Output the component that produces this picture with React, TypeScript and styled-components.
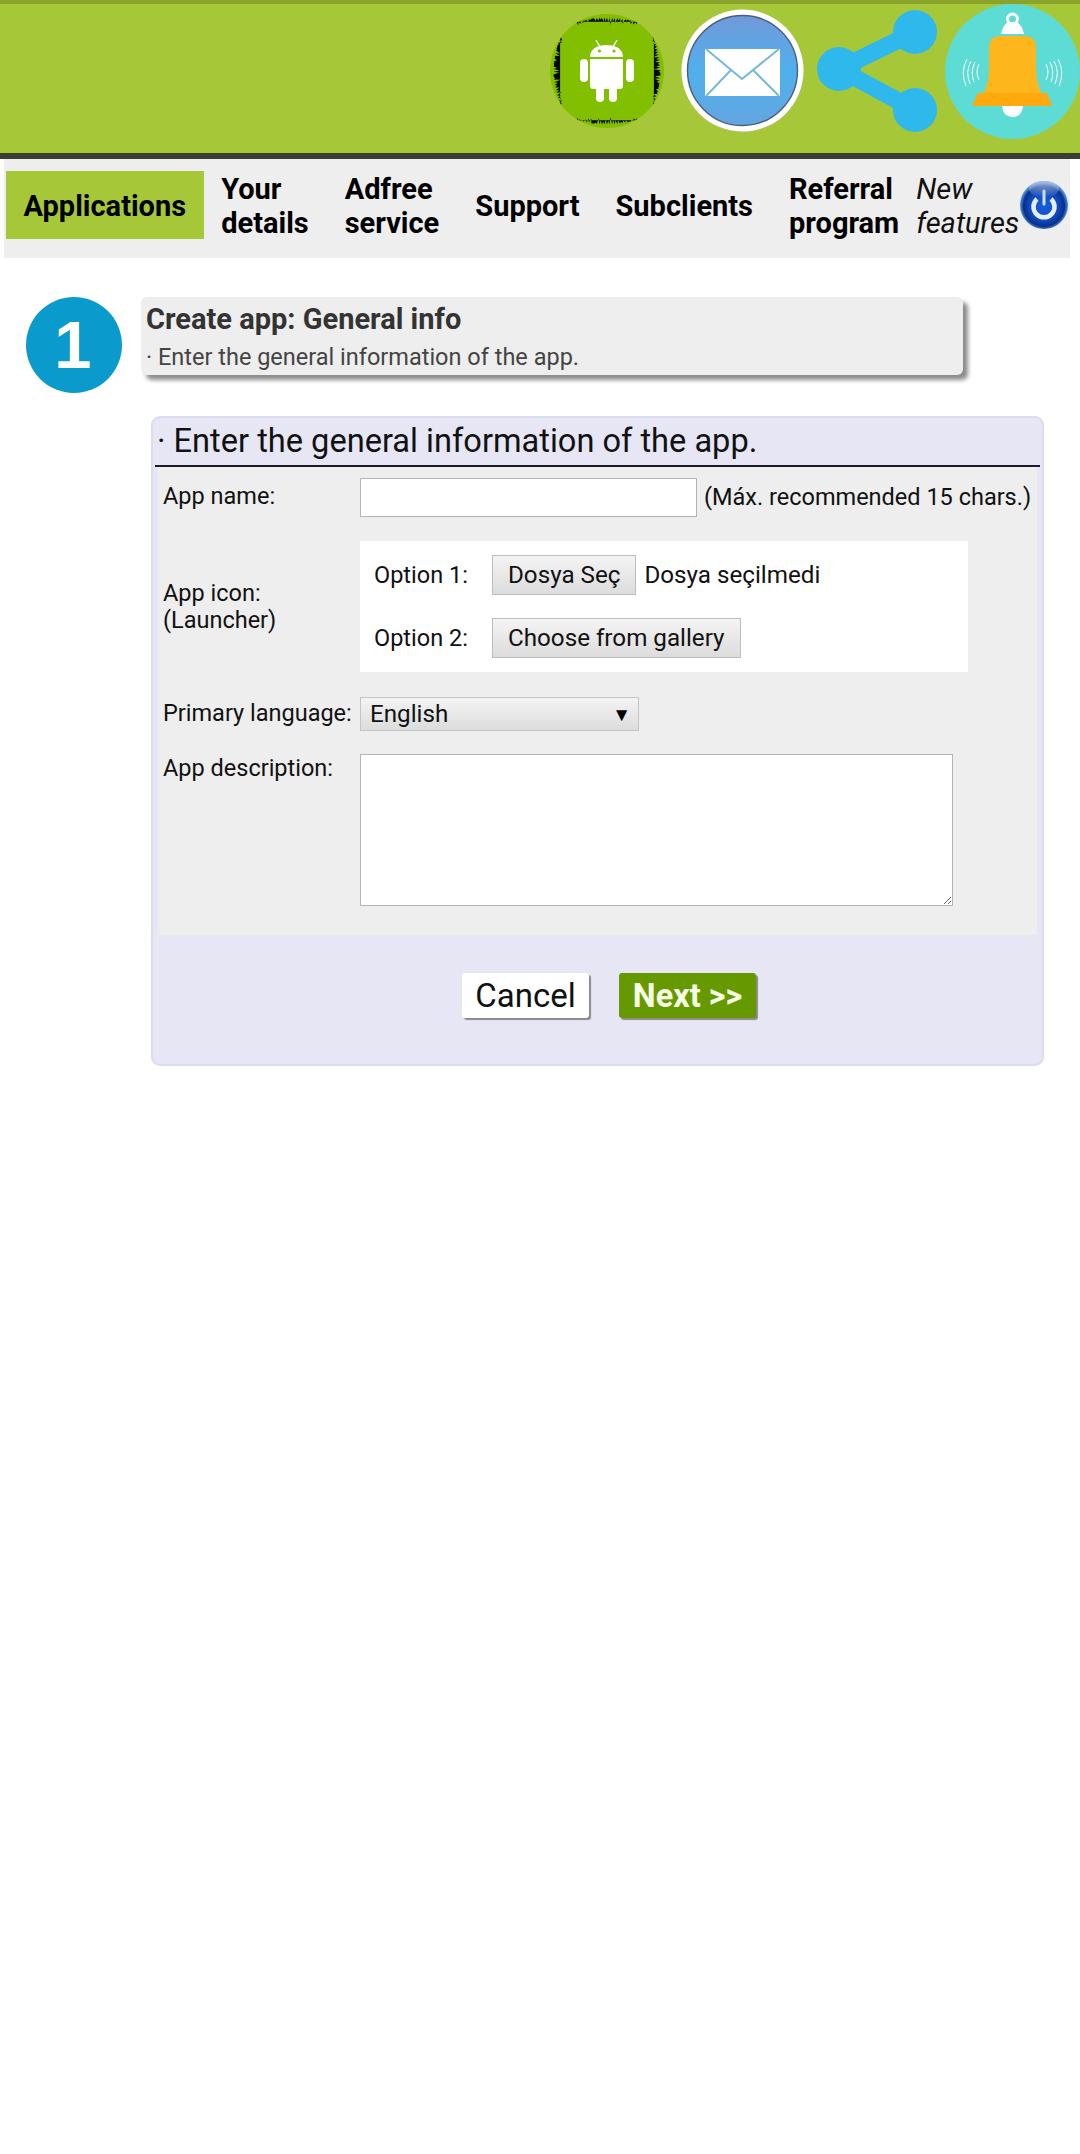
import React from "react";
import styled, { createGlobalStyle } from "styled-components";

const Global = createGlobalStyle`
  html, body { margin: 0; padding: 0; background: #fff; }
  body { font-family: Roboto, "Liberation Sans", sans-serif; color: #111; }
  #root { min-height: 2154px; }
  * { box-sizing: border-box; }
`;

const Header = styled.header`
  height: 153px;
  background: #a6c838;
  border-top: 4px solid #8aa32a;
  padding-bottom: 15px;
  display: flex;
  align-items: center;
  justify-content: flex-end;
`;
const Rule = styled.div`
  height: 6px;
  background: #3a3f32;
`;
const IconSlot = styled.svg<{ $gap?: number }>`
  display: block;
  flex: none;
  margin-left: ${(p) => p.$gap ?? 0}px;
`;

const Nav = styled.nav`
  margin: 0 10px 0 4px;
  height: 99px;
  background: #eeeeee;
  padding: 12px 0 19px 1.5px;
  display: flex;
  align-items: stretch;
`;
const NavItem = styled.a<{ $active?: boolean }>`
  display: flex;
  align-items: center;
  padding: 2px 18px 0;
  margin-right: ${(p) => (p.$active ? "-1px" : "0")};
  font-size: 29px;
  line-height: 34px;
  font-weight: 700;
  color: #000;
  background: ${(p) => (p.$active ? "#a6c838" : "transparent")};
`;
const NavNote = styled.a`
  display: flex;
  align-items: center;
  padding-top: 2px;
  margin-left: -1px;
  font-size: 29px;
  line-height: 34px;
  font-style: italic;
  color: #111;
`;
const PowerSlot = styled.svg`
  display: block;
  align-self: center;
  flex: none;
  margin-left: 1px;
`;

const StepRow = styled.section`
  display: flex;
  align-items: flex-start;
  padding: 39px 0 0 26px;
`;
const StepBadge = styled.div`
  width: 96px;
  height: 96px;
  padding: 0 2px 2px 0;
  border-radius: 50%;
  background: #0a9acb;
  color: #fff;
  display: flex;
  align-items: center;
  justify-content: center;
  font-family: "Liberation Sans", Arial, sans-serif;
  font-weight: 700;
  font-size: 67px;
  line-height: 1;
`;
const StepCard = styled.div`
  margin-left: 19px;
  width: 822px;
  height: 78px;
  padding: 4px 5px;
  border-radius: 6px;
  background: #eeeeee;
  box-shadow: 5px 5px 4px #8c8c8c;
`;
const StepTitle = styled.div`
  font-size: 29px;
  line-height: 36px;
  font-weight: 700;
  color: #333;
`;
const StepText = styled.div`
  font-size: 23.5px;
  line-height: 40px;
  height: 34px;
  color: #444;
`;

const Panel = styled.section`
  margin: 23px 0 0 151px;
  width: 893px;
  height: 650px;
  background: #e6e6f5;
  border: 2px solid #dcdcef;
  border-radius: 9px;
  padding: 0 2px;
`;
const PanelHeading = styled.h2`
  margin: 0;
  height: 49px;
  padding-left: 2px;
  border-bottom: 2px solid #1c1c24;
  font-size: 32.6px;
  font-weight: 400;
  line-height: 46px;
  color: #111;
`;
const FormBody = styled.div`
  margin: 0 3px;
  height: 468px;
  background: #eeeeee;
  padding: 11px 0 0 5px;
`;
const FieldRow = styled.div<{ $top?: number; $start?: boolean }>`
  display: flex;
  align-items: ${(p) => (p.$start ? "flex-start" : "center")};
  margin-top: ${(p) => p.$top ?? 0}px;
`;
const FieldLabel = styled.label<{ $nudge?: number }>`
  width: 197px;
  flex: none;
  font-size: 23.5px;
  line-height: 27px;
  color: #111;
  padding-top: ${(p) => Math.max(p.$nudge ?? 0, 0)}px;
  padding-bottom: ${(p) => Math.max(-(p.$nudge ?? 0), 0)}px;
`;
const TextInput = styled.input`
  width: 337px;
  height: 39px;
  background: #fff;
  border: 1px solid #b4b4b4;
  padding: 0 6px;
`;
const Hint = styled.span`
  margin-left: 7px;
  padding-bottom: 1px;
  font-size: 23.5px;
  white-space: nowrap;
  color: #111;
`;
const IconBox = styled.div`
  width: 608px;
  height: 131px;
  background: #fff;
  padding: 14px;
  display: flex;
  flex-direction: column;
  gap: 23px;
`;
const OptionRow = styled.div`
  display: flex;
  align-items: center;
  font-size: 24.2px;
  color: #111;
`;
const OptionLabel = styled.span`
  width: 118px;
  flex: none;
  font-size: 23.5px;
`;
const GreyButton = styled.button`
  height: 40px;
  padding: 0 15px;
  border: 1px solid #bdbdbd;
  border-radius: 0;
  background: linear-gradient(#f4f4f4, #dcdcdc);
  font-family: inherit;
  font-size: 24.2px;
  color: #111;
`;
const FileName = styled.span`
  margin-left: 8px;
`;
const LanguageSelect = styled.div`
  width: 279px;
  height: 34px;
  padding: 0 7px 0 9px;
  border: 1px solid #c4c4c4;
  background: linear-gradient(#f4f4f4, #dcdcdc);
  display: flex;
  align-items: center;
  justify-content: space-between;
  font-size: 24.2px;
  color: #111;
`;
const Caret = styled.span`
  font-size: 19px;
  color: #000;
`;
const Description = styled.textarea`
  width: 593px;
  height: 152px;
  display: block;
  background: #fff;
  border: 1px solid #b4b4b4;
`;
const Footer = styled.div`
  padding: 38px 0 0 307px;
  display: flex;
  gap: 30px;
`;
const CancelButton = styled.button`
  width: 127px;
  height: 45px;
  padding: 0;
  border: 0;
  border-radius: 3px;
  background: #fff;
  box-shadow: 2px 2px 1px #8a8a8a;
  font-family: inherit;
  font-size: 33px;
  color: #111;
`;
const NextButton = styled(CancelButton)`
  width: 137px;
  background: #669900;
  font-weight: 700;
  font-size: 32.4px;
  color: #f6ffe6;
`;

const spikes = (from: number, to: number, seed: number) => {
  const r = 57;
  const c = 57;
  const pts: string[] = [];
  const n = Math.round((to - from) / 1.4);
  const p = (a: number, rad: number) =>
    `${(c + rad * Math.cos((a * Math.PI) / 180)).toFixed(1)} ${(c + rad * Math.sin((a * Math.PI) / 180)).toFixed(1)}`;
  pts.push(`M${p(from, r + 1)}`);
  for (let i = 0; i <= n; i++) {
    const a = from + ((to - from) * i) / n;
    const envelope = Math.sin((Math.PI * i) / n);
    const noise = Math.abs(Math.sin((i + seed) * 12.9898) * 43758.5453) % 1;
    const depth = i % 2 ? 3.5 * envelope : (3 + 8 * noise) * (0.3 + 0.7 * envelope);
    pts.push(`L${p(a, r - depth)}`);
  }
  pts.push(`L${p(to, r + 1)}Z`);
  return pts.join("");
};

const AndroidIcon = () => (
  <IconSlot width="114" height="114" viewBox="0 0 114 114">
    <defs>
      <clipPath id="androidDisc">
        <circle cx="57" cy="57" r="57" />
      </clipPath>
    </defs>
    <circle cx="57" cy="57" r="57" fill="#82bf00" />
    <g clipPath="url(#androidDisc)" fill="#050505">
      <path d={spikes(-122, -58, 1)} />
      <path d={spikes(58, 122, 7)} />
      <path d={spikes(-36, 36, 13)} />
      <path d={spikes(144, 216, 19)} />
    </g>
    <g fill="#fff">
      <path d="M40 43 C40 35 47 31 56.5 31 C66 31 73 35 73 43 Z" />
      <path d="M40 45 H73 V72 Q73 75 70 75 H43 Q40 75 40 72 Z" />
      <rect x="30" y="45" width="8" height="23" rx="4" />
      <rect x="76" y="45" width="8" height="23" rx="4" />
      <rect x="46" y="72" width="8" height="16" rx="4" />
      <rect x="59" y="72" width="8" height="16" rx="4" />
    </g>
    <path d="M46 26 L50 33 M67 26 L63 33" stroke="#fff" strokeWidth="1.4" />
    <circle cx="49.5" cy="37" r="1.6" fill="#82bf00" />
    <circle cx="64" cy="37" r="1.6" fill="#82bf00" />
  </IconSlot>
);

const MailIcon = () => (
  <IconSlot $gap={17} width="123" height="124" viewBox="0 0 123 124">
    <defs>
      <linearGradient id="mailFill" x1="0" y1="0" x2="0" y2="1">
        <stop offset="0" stopColor="#7199d9" />
        <stop offset="0.5" stopColor="#4fb0ec" />
        <stop offset="1" stopColor="#64a6e0" />
      </linearGradient>
    </defs>
    <circle cx="61.5" cy="62.5" r="61" fill="#b9c26b" />
    <circle cx="61.5" cy="61.5" r="61" fill="#fff" />
    <circle cx="61.5" cy="61.5" r="55" fill="url(#mailFill)" stroke="#4c5f7c" strokeWidth="1.4" />
    <path d="M24 40 H99 V87 H24 Z" fill="#fff" />
    <path d="M25 40 L61 70 L98 40 M25 87 L50 61 M98 87 L72 61" fill="none" stroke="#76b8dc" strokeWidth="2" />
  </IconSlot>
);

const ShareIcon = () => (
  <IconSlot $gap={13} width="120" height="122" viewBox="0 0 120 122">
    <path d="M22 59 L98 22 M22 59 L98 100" stroke="#2fb8ec" strokeWidth="17" fill="none" />
    <circle cx="22" cy="59" r="22" fill="#2fb8ec" />
    <circle cx="98" cy="22" r="22" fill="#2fb8ec" />
    <circle cx="98" cy="100" r="22" fill="#2fb8ec" />
  </IconSlot>
);

const BellIcon = () => (
  <IconSlot $gap={8} width="135" height="135" viewBox="0 0 135 135">
    <circle cx="67.5" cy="67.5" r="67.5" fill="#5cdcd4" />
    <circle cx="67.5" cy="15" r="5" fill="none" stroke="#fff" strokeWidth="3" />
    <path d="M56 30 Q58 21 63 18 H72 Q77 21 79 30 Z" fill="#fff" />
    <path d="M57 102 H78 Q77 113 67.5 113 Q58 113 57 102 Z" fill="#fff" />
    <path d="M44 44 Q44 32 56 32 H79 Q91 32 91 44 V62 Q91 80 97 90 H38 Q44 80 44 62 Z" fill="#fdb71c" />
    <path d="M33 89 H102 L107 102 H27 Z" fill="#ffa90f" />
    <g fill="none" stroke="#fff" strokeWidth="1">
      <path d="M22 55 Q15 68 21 82" />
      <path d="M26 57 Q20 68 25 80" />
      <path d="M30 58 Q25 68 29 78" />
      <path d="M34 60 Q30 68 34 76" />
      <path d="M101 60 Q105 68 101 76" />
      <path d="M105 58 Q110 68 106 78" />
      <path d="M109 57 Q115 68 110 80" />
      <path d="M113 55 Q120 68 114 82" />
    </g>
  </IconSlot>
);

const PowerIcon = () => (
  <PowerSlot width="48" height="50" viewBox="0 0 48 50">
    <defs>
      <radialGradient id="powerFill" cx="0.5" cy="0.52" r="0.5">
        <stop offset="0" stopColor="#1860d8" />
        <stop offset="0.6" stopColor="#0f4ac0" />
        <stop offset="0.85" stopColor="#0a2f88" />
        <stop offset="1" stopColor="#4f96e6" />
      </radialGradient>
      <linearGradient id="powerShine" x1="0" y1="0" x2="0" y2="1">
        <stop offset="0" stopColor="#b8c8e6" stopOpacity="0.85" />
        <stop offset="1" stopColor="#b8c8e6" stopOpacity="0" />
      </linearGradient>
    </defs>
    <circle cx="24" cy="25" r="24" fill="url(#powerFill)" />
    <ellipse cx="24" cy="9" rx="15" ry="8" fill="url(#powerShine)" />
    <path d="M17 19 A10.5 10.5 0 1 0 31 19" fill="none" stroke="#e4eeff" strokeWidth="4.5" />
    <path d="M24 11 V24" stroke="#cfe0ff" strokeWidth="3" strokeLinecap="round" />
  </PowerSlot>
);

export default function App() {
  return (
    <>
      <Global />
      <Header>
        <AndroidIcon />
        <MailIcon />
        <ShareIcon />
        <BellIcon />
      </Header>
      <Rule />
      <Nav>
        <NavItem $active>Applications</NavItem>
        <NavItem>
          Your
          <br />
          details
        </NavItem>
        <NavItem>
          Adfree
          <br />
          service
        </NavItem>
        <NavItem>Support</NavItem>
        <NavItem>Subclients</NavItem>
        <NavItem>
          Referral
          <br />
          program
        </NavItem>
        <NavNote>
          New
          <br />
          features
        </NavNote>
        <PowerIcon />
      </Nav>
      <StepRow>
        <StepBadge>1</StepBadge>
        <StepCard>
          <StepTitle>Create app: General info</StepTitle>
          <StepText>· Enter the general information of the app.</StepText>
        </StepCard>
      </StepRow>
      <Panel>
        <PanelHeading>· Enter the general information of the app.</PanelHeading>
        <FormBody>
          <FieldRow>
            <FieldLabel $nudge={-2}>App name:</FieldLabel>
            <TextInput />
            <Hint>(Máx. recommended 15 chars.)</Hint>
          </FieldRow>
          <FieldRow $top={24}>
            <FieldLabel>
              App icon:
              <br />
              (Launcher)
            </FieldLabel>
            <IconBox>
              <OptionRow>
                <OptionLabel>Option 1:</OptionLabel>
                <GreyButton>Dosya Seç</GreyButton>
                <FileName>Dosya seçilmedi</FileName>
              </OptionRow>
              <OptionRow>
                <OptionLabel>Option 2:</OptionLabel>
                <GreyButton>Choose from gallery</GreyButton>
              </OptionRow>
            </IconBox>
          </FieldRow>
          <FieldRow $top={25}>
            <FieldLabel $nudge={-2}>Primary language:</FieldLabel>
            <LanguageSelect>
              English
              <Caret>▼</Caret>
            </LanguageSelect>
          </FieldRow>
          <FieldRow $top={23} $start>
            <FieldLabel $nudge={1}>App description:</FieldLabel>
            <Description />
          </FieldRow>
        </FormBody>
        <Footer>
          <CancelButton>Cancel</CancelButton>
          <NextButton>Next &gt;&gt;</NextButton>
        </Footer>
      </Panel>
    </>
  );
}
